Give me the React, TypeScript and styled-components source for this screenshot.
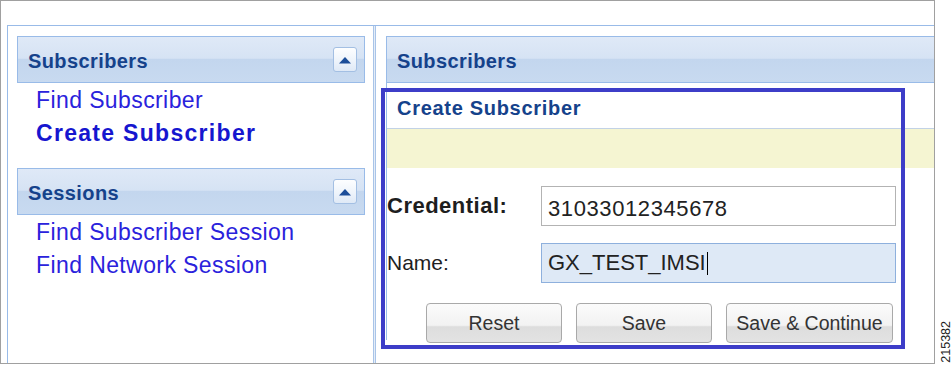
import React from "react";
import styled, { createGlobalStyle } from "styled-components";

const GlobalStyle = createGlobalStyle`
  html, body { margin: 0; padding: 0; background: #ffffff; }
  body { font-family: "Liberation Sans", Arial, sans-serif; overflow: hidden; }
  * { box-sizing: border-box; }
`;

const Page = styled.div`
  display: flex;
  width: 952px;
  height: 365px;
  overflow: hidden;
`;

const Frame = styled.div`
  width: 936px;
  height: 364px;
  border: 1px solid #a0a0a0;
  background: #ffffff;
  overflow: hidden;
  padding: 24px 0 0 6px;
`;

const Side = styled.div`
  flex: 1;
  display: flex;
  align-items: flex-end;
  padding: 0 0 2px 6px;
`;

const FigureId = styled.div`
  writing-mode: vertical-rl;
  transform: rotate(180deg);
  font-size: 12.5px;
  line-height: 11px;
  color: #222;
`;

const Panel = styled.div`
  display: flex;
  height: 100%;
  border-top: 1px solid #99bbe8;
  border-left: 1px solid #99bbe8;
`;

const LeftCol = styled.div`
  width: 365px;
  flex: none;
  padding: 10px 8px 0 9px;
`;

const Splitter = styled.div`
  width: 3px;
  flex: none;
  border-left: 1px solid #a9c4e8;
  border-right: 1px solid #a9c4e8;
  background: #e4edf8;
`;

const RightCol = styled.div`
  flex: 1;
  position: relative;
  padding: 10px 0 0 10px;
`;

const PanelHeader = styled.div<{ $open?: boolean }>`
  display: flex;
  align-items: center;
  justify-content: space-between;
  height: 47px;
  padding: 0 7px 0 10px;
  border: 1px solid #99bbe8;
  ${(p) => (p.$open ? "border-right: none;" : "")}
  background: linear-gradient(
    to bottom,
    #dfe9f7 0%,
    #d6e3f4 47%,
    #c3d6ee 50%,
    #c8daf0 100%
  );
`;

const HeaderTitle = styled.span`
  font-size: 20px;
  line-height: 23px;
  padding-top: 3px;
  font-weight: bold;
  letter-spacing: 0.4px;
  color: #15428b;
`;

const ToolButton = styled.span`
  width: 24px;
  height: 25px;
  display: flex;
  align-items: center;
  justify-content: center;
  border: 1px solid #a3bfe3;
  border-radius: 3px;
  background: linear-gradient(to bottom, #fdfeff 0%, #eef4fb 55%, #dfe9f6 100%);
`;

const LinkList = styled.div`
  display: flex;
  flex-direction: column;
  padding: 1px 0 0 19px;
  margin-bottom: 18px;
`;

const NavLink = styled.a<{ $active?: boolean }>`
  font-size: 23px;
  line-height: 33px;
  font-weight: ${(p) => (p.$active ? "bold" : "normal")};
  letter-spacing: ${(p) => (p.$active ? "1.3px" : "0.4px")};
  color: ${(p) => (p.$active ? "#1616cf" : "#2a22dc")};
  text-decoration: none;
  white-space: nowrap;
`;

const RightBody = styled.div`
  border-left: 1px solid #99bbe8;
`;

const SubTitle = styled.div`
  height: 46px;
  padding: 13px 0 0 10px;
  font-size: 20px;
  line-height: 24px;
  font-weight: bold;
  letter-spacing: 0.7px;
  color: #15428b;
  border-bottom: 1px solid #c2d2e6;
  background: #ffffff;
`;

const Notice = styled.div`
  height: 39px;
  background: #f5f5d2;
`;

const Form = styled.div`
  display: grid;
  grid-template-columns: 154px 355px;
  grid-auto-rows: 40px;
  row-gap: 17px;
  padding-top: 18px;
`;

const Label = styled.label<{ $strong?: boolean }>`
  align-self: center;
  font-size: ${(p) => (p.$strong ? "22px" : "21px")};
  font-weight: ${(p) => (p.$strong ? "bold" : "normal")};
  letter-spacing: ${(p) => (p.$strong ? "0.5px" : "0")};
  color: #1e1e1e;
  white-space: nowrap;
`;

const Field = styled.div<{ $focused?: boolean; $drop?: number; $spacing?: number }>`
  display: flex;
  align-items: center;
  height: 40px;
  padding: ${(p) => p.$drop ?? 0}px 0 0 6px;
  font-size: 22px;
  letter-spacing: ${(p) => p.$spacing ?? 0}px;
  color: #222;
  border: 1px solid ${(p) => (p.$focused ? "#8eb0dd" : "#b3b3b3")};
  background: ${(p) => (p.$focused ? "#dee9f6" : "#ffffff")};
  white-space: nowrap;
`;

const Caret = styled.span`
  display: inline-block;
  width: 1px;
  height: 23px;
  margin-left: 1px;
  background: #000;
`;

const ButtonBar = styled.div`
  grid-column: 1 / -1;
  display: flex;
  gap: 14px;
  margin-top: 3px;
  padding-left: 39px;
`;

const Button = styled.button<{ $w: number }>`
  width: ${(p) => p.$w}px;
  height: 40px;
  border: 1px solid #a9a9a9;
  border-radius: 4px;
  font-family: "Liberation Sans", Arial, sans-serif;
  font-size: 19.5px;
  color: #333;
  padding: 0;
  background: linear-gradient(
    to bottom,
    #fbfbfb 0%,
    #f2f2f2 56%,
    #dddddd 60%,
    #e3e3e3 100%
  );
`;

const Highlight = styled.div`
  position: absolute;
  left: 5px;
  top: 62px;
  width: 524px;
  height: 261px;
  border: 4px solid #3d3dc8;
  pointer-events: none;
`;

const CollapseIcon = () => (
  <svg width="14" height="8" viewBox="0 0 14 8">
    <path d="M1 7.5 L7 1 L13 7.5 Z" fill="#1d4e99" />
  </svg>
);

const Section = ({ title }: { title: string }) => (
  <PanelHeader>
    <HeaderTitle>{title}</HeaderTitle>
    <ToolButton>
      <CollapseIcon />
    </ToolButton>
  </PanelHeader>
);

export default function App() {
  return (
    <>
      <GlobalStyle />
      <Page>
        <Frame>
          <Panel>
            <LeftCol>
              <Section title="Subscribers" />
              <LinkList>
                <NavLink href="#">Find Subscriber</NavLink>
                <NavLink href="#" $active>
                  Create Subscriber
                </NavLink>
              </LinkList>
              <Section title="Sessions" />
              <LinkList>
                <NavLink href="#">Find Subscriber Session</NavLink>
                <NavLink href="#">Find Network Session</NavLink>
              </LinkList>
            </LeftCol>
            <Splitter />
            <RightCol>
              <PanelHeader $open>
                <HeaderTitle>Subscribers</HeaderTitle>
              </PanelHeader>
              <RightBody>
                <SubTitle>Create Subscriber</SubTitle>
                <Notice />
                <Form>
                  <Label $strong>Credential:</Label>
                  <Field $drop={6} $spacing={0.6}>
                    31033012345678
                  </Field>
                  <Label>Name:</Label>
                  <Field $focused>
                    GX_TEST_IMSI
                    <Caret />
                  </Field>
                  <ButtonBar>
                    <Button $w={136}>Reset</Button>
                    <Button $w={136}>Save</Button>
                    <Button $w={167}>Save &amp; Continue</Button>
                  </ButtonBar>
                </Form>
              </RightBody>
              <Highlight />
            </RightCol>
          </Panel>
        </Frame>
        <Side>
          <FigureId>215382</FigureId>
        </Side>
      </Page>
    </>
  );
}
